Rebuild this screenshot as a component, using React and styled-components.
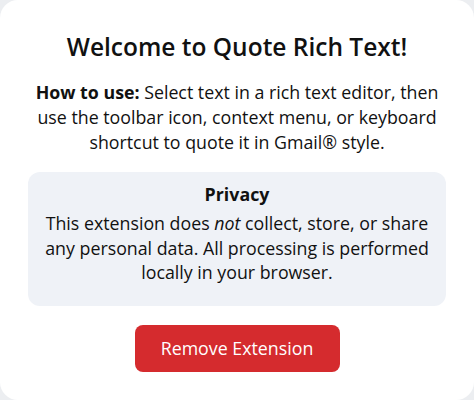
import styled, { createGlobalStyle } from "styled-components"

const GlobalStyle = createGlobalStyle`
  html, body {
    margin: 0;
    padding: 0;
    background: #eceef1;
  }
  body {
    font-family: "Open Sans", "Noto Sans", sans-serif;
    color: #111;
  }
`

const Card = styled.div`
  box-sizing: border-box;
  width: 474px;
  height: 400px;
  background: #fff;
  border-radius: 18px;
  display: flex;
  flex-direction: column;
  align-items: center;
  padding: 31px 28px 0;
`

const Title = styled.h1`
  margin: 0;
  font-size: 24.5px;
  font-weight: 600;
  line-height: 32px;
`

const Intro = styled.p`
  margin: 17px 0 0;
  font-size: 17.8px;
  line-height: 25px;
  text-align: center;

  strong {
    font-weight: 700;
  }
`

const PrivacyBox = styled.section`
  box-sizing: border-box;
  width: 100%;
  margin-top: 17px;
  padding: 5px 12px 21px;
  background: #eff2f7;
  border-radius: 12px;
  text-align: center;
`

const BoxTitle = styled.h2`
  margin: 0;
  font-size: 17.8px;
  font-weight: 700;
  line-height: 34px;
`

const BoxText = styled.p`
  margin: 0;
  font-size: 17.8px;
  line-height: 24.5px;
`

const RemoveButton = styled.button`
  margin-top: 19px;
  width: 205px;
  height: 47px;
  border: none;
  border-radius: 8px;
  background: #d52b2e;
  color: #fff;
  font-family: inherit;
  font-size: 17.8px;
  cursor: pointer;
`

export default function App() {
  return (
    <>
      <GlobalStyle />
      <Card>
        <Title>Welcome to Quote Rich Text!</Title>
        <Intro>
          <strong>How to use:</strong> Select text in a rich text editor, then
          use the toolbar icon, context menu, or keyboard shortcut to quote it
          in Gmail® style.
        </Intro>
        <PrivacyBox>
          <BoxTitle>Privacy</BoxTitle>
          <BoxText>
            This extension does <em>not</em> collect, store, or share any
            personal data. All processing is performed locally in your browser.
          </BoxText>
        </PrivacyBox>
        <RemoveButton>Remove Extension</RemoveButton>
      </Card>
    </>
  )
}
